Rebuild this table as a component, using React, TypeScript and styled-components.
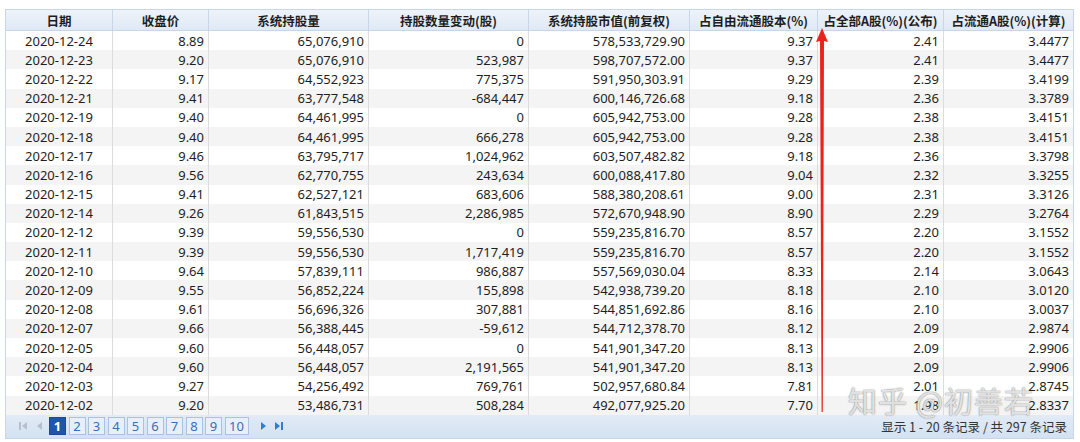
import styled, { createGlobalStyle } from "styled-components";

const GlobalStyle = createGlobalStyle`
  html, body {
    margin: 0;
    padding: 0;
    background: #fff;
  }
  body {
    font-family: "Noto Sans", "Noto Sans CJK SC", sans-serif;
    color: #222;
  }
`;

const COLS = "107px 96px 160px 160px 161px 128px 126px 129px";

const Page = styled.div`
  padding: 9px 8px 0 5px;
  position: relative;
`;

const Grid = styled.div`
  width: 1067px;
  border: 1px solid #c7d6e8;
  border-bottom: none;
  position: relative;
`;

const Row = styled.div<{ $alt?: boolean }>`
  display: grid;
  grid-template-columns: ${COLS};
  height: 19.2px;
  background: ${(p) => (p.$alt ? "#f4f4f4" : "#fff")};
`;

const HeadRow = styled.div`
  display: grid;
  grid-template-columns: ${COLS};
  height: 20px;
  background: linear-gradient(#eef3fa, #dfe9f5);
  border-bottom: 1px solid #c7d6e8;
`;

const HeadCell = styled.div`
  display: flex;
  align-items: center;
  justify-content: center;
  font-family: "Noto Sans CJK SC", sans-serif;
  font-size: 12.5px;
  font-weight: 700;
  color: #1d1d1d;
  border-right: 1px solid #c7d6e8;
  &:last-child {
    border-right: none;
  }
`;

const Cell = styled.div<{ $center?: boolean }>`
  display: flex;
  align-items: center;
  justify-content: ${(p) => (p.$center ? "center" : "flex-end")};
  padding-right: ${(p) => (p.$center ? "0" : "4px")};
  font-size: 13px;
  color: #1e1e1e;
  border-right: 1px solid #dcdcdc;
  white-space: nowrap;
  &:last-child {
    border-right: none;
  }
`;

const Footer = styled.div`
  width: 1067px;
  height: 23px;
  border: 1px solid #c7d6e8;
  border-top: none;
  background: linear-gradient(#e2ebf6, #d3e1f1);
  display: flex;
  align-items: center;
  justify-content: space-between;
  box-sizing: content-box;
`;

const Pager = styled.div`
  display: flex;
  align-items: center;
  padding-left: 10px;
  gap: 2.5px;
`;

const NavIcon = styled.span<{ $on?: boolean }>`
  display: inline-flex;
  align-items: center;
  justify-content: center;
  width: 14px;
  height: 18px;
  color: ${(p) => (p.$on ? "#2a7fd6" : "#b6c0cc")};
`;

const PageBtn = styled.span<{ $active?: boolean; $wide?: boolean }>`
  display: inline-flex;
  align-items: center;
  justify-content: center;
  box-sizing: border-box;
  width: ${(p) => (p.$wide ? "24px" : "17px")};
  height: 18px;
  font-size: 13px;
  border: 1px solid ${(p) => (p.$active ? "#1b4a9a" : "#a9c2e2")};
  background: ${(p) => (p.$active ? "#1f56a8" : "#e8eff8")};
  color: ${(p) => (p.$active ? "#fff" : "#3a6db5")};
  font-weight: ${(p) => (p.$active ? 700 : 400)};
`;

const NavGap = styled.span`
  width: 2px;
`;

const Info = styled.div`
  font-family: "Noto Sans CJK SC", sans-serif;
  font-size: 12.5px;
  color: #333;
  padding-right: 6px;
`;

const Arrow = styled.svg`
  position: absolute;
  left: 813px;
  top: 28px;
  pointer-events: none;
`;

const Watermark = styled.div`
  position: absolute;
  left: 848px;
  top: 386px;
  font-family: "Noto Sans CJK SC", sans-serif;
  font-size: 29px;
  line-height: 1;
  letter-spacing: 1px;
  color: rgba(255, 255, 255, 0.8);
  text-shadow: 0 0 1px rgba(90, 90, 90, 0.8), 0 0 2px rgba(120, 120, 120, 0.5);
  pointer-events: none;
`;

const headers = [
  "日期",
  "收盘价",
  "系统持股量",
  "持股数量变动(股)",
  "系统持股市值(前复权)",
  "占自由流通股本(%)",
  "占全部A股(%)(公布)",
  "占流通A股(%)(计算)",
];

const rows: string[][] = [
  ["2020-12-24", "8.89", "65,076,910", "0", "578,533,729.90", "9.37", "2.41", "3.4477"],
  ["2020-12-23", "9.20", "65,076,910", "523,987", "598,707,572.00", "9.37", "2.41", "3.4477"],
  ["2020-12-22", "9.17", "64,552,923", "775,375", "591,950,303.91", "9.29", "2.39", "3.4199"],
  ["2020-12-21", "9.41", "63,777,548", "-684,447", "600,146,726.68", "9.18", "2.36", "3.3789"],
  ["2020-12-19", "9.40", "64,461,995", "0", "605,942,753.00", "9.28", "2.38", "3.4151"],
  ["2020-12-18", "9.40", "64,461,995", "666,278", "605,942,753.00", "9.28", "2.38", "3.4151"],
  ["2020-12-17", "9.46", "63,795,717", "1,024,962", "603,507,482.82", "9.18", "2.36", "3.3798"],
  ["2020-12-16", "9.56", "62,770,755", "243,634", "600,088,417.80", "9.04", "2.32", "3.3255"],
  ["2020-12-15", "9.41", "62,527,121", "683,606", "588,380,208.61", "9.00", "2.31", "3.3126"],
  ["2020-12-14", "9.26", "61,843,515", "2,286,985", "572,670,948.90", "8.90", "2.29", "3.2764"],
  ["2020-12-12", "9.39", "59,556,530", "0", "559,235,816.70", "8.57", "2.20", "3.1552"],
  ["2020-12-11", "9.39", "59,556,530", "1,717,419", "559,235,816.70", "8.57", "2.20", "3.1552"],
  ["2020-12-10", "9.64", "57,839,111", "986,887", "557,569,030.04", "8.33", "2.14", "3.0643"],
  ["2020-12-09", "9.55", "56,852,224", "155,898", "542,938,739.20", "8.18", "2.10", "3.0120"],
  ["2020-12-08", "9.61", "56,696,326", "307,881", "544,851,692.86", "8.16", "2.10", "3.0037"],
  ["2020-12-07", "9.66", "56,388,445", "-59,612", "544,712,378.70", "8.12", "2.09", "2.9874"],
  ["2020-12-05", "9.60", "56,448,057", "0", "541,901,347.20", "8.13", "2.09", "2.9906"],
  ["2020-12-04", "9.60", "56,448,057", "2,191,565", "541,901,347.20", "8.13", "2.09", "2.9906"],
  ["2020-12-03", "9.27", "54,256,492", "769,761", "502,957,680.84", "7.81", "2.01", "2.8745"],
  ["2020-12-02", "9.20", "53,486,731", "508,284", "492,077,925.20", "7.70", "1.98", "2.8337"],
];

const FirstIcon = () => (
  <svg width="10" height="10" viewBox="0 0 10 10">
    <rect x="1" y="1" width="2" height="8" fill="currentColor" />
    <polygon points="9,1 4,5 9,9" fill="currentColor" />
  </svg>
);
const PrevIcon = () => (
  <svg width="8" height="10" viewBox="0 0 8 10">
    <polygon points="6,1 1,5 6,9" fill="currentColor" />
  </svg>
);
const NextIcon = () => (
  <svg width="8" height="10" viewBox="0 0 8 10">
    <polygon points="2,1 7,5 2,9" fill="currentColor" />
  </svg>
);
const LastIcon = () => (
  <svg width="10" height="10" viewBox="0 0 10 10">
    <polygon points="1,1 6,5 1,9" fill="currentColor" />
    <rect x="7" y="1" width="2" height="8" fill="currentColor" />
  </svg>
);

const App = () => {
  const pages = [1, 2, 3, 4, 5, 6, 7, 8, 9, 10];
  return (
    <>
      <GlobalStyle />
      <Page>
        <Grid>
          <HeadRow>
            {headers.map((h) => (
              <HeadCell key={h}>{h}</HeadCell>
            ))}
          </HeadRow>
          {rows.map((r, i) => (
            <Row key={r[0]} $alt={i % 2 === 1}>
              {r.map((v, j) => (
                <Cell key={j} $center={j === 0}>
                  {v}
                </Cell>
              ))}
            </Row>
          ))}
        </Grid>
        <Footer>
          <Pager>
            <NavIcon><FirstIcon /></NavIcon>
            <NavIcon><PrevIcon /></NavIcon>
            {pages.map((p) => (
              <PageBtn key={p} $active={p === 1} $wide={p === 10}>
                {p}
              </PageBtn>
            ))}
            <NavGap />
            <NavIcon $on><NextIcon /></NavIcon>
            <NavIcon $on><LastIcon /></NavIcon>
          </Pager>
          <Info>显示 1 - 20 条记录 / 共 297 条记录</Info>
        </Footer>
        <Watermark>知乎 @初善若</Watermark>
        <Arrow width="20" height="386" viewBox="0 0 20 386">
          <polygon points="9,0 15,14 11,13 9.8,384 8.6,384 7,13 3,14" fill="#e8241c" />
        </Arrow>
      </Page>
    </>
  );
};

export default App;
